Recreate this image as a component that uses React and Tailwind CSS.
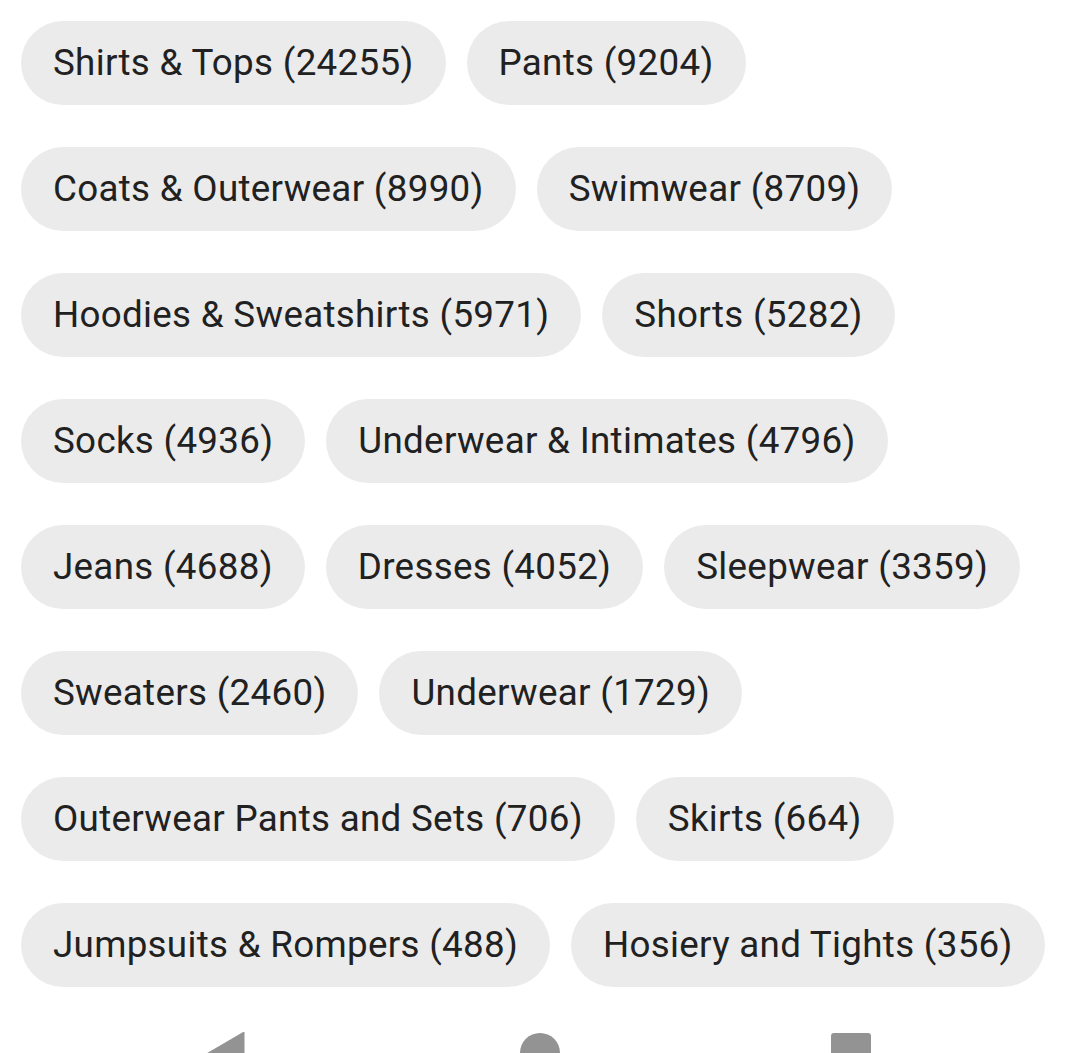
const categories = [
  ["Shirts & Tops", 24255],
  ["Pants", 9204],
  ["Coats & Outerwear", 8990],
  ["Swimwear", 8709],
  ["Hoodies & Sweatshirts", 5971],
  ["Shorts", 5282],
  ["Socks", 4936],
  ["Underwear & Intimates", 4796],
  ["Jeans", 4688],
  ["Dresses", 4052],
  ["Sleepwear", 3359],
  ["Sweaters", 2460],
  ["Underwear", 1729],
  ["Outerwear Pants and Sets", 706],
  ["Skirts", 664],
  ["Jumpsuits & Rompers", 488],
  ["Hosiery and Tights", 356],
];

// rows as laid out on the phone (chip group wraps at this width)
const rows = [
  [0, 1],
  [2, 3],
  [4, 5],
  [6, 7],
  [8, 9, 10],
  [11, 12],
  [13, 14],
  [15, 16],
];

function Chip({ label, count }) {
  return (
    <button className="flex h-[84px] shrink-0 items-center whitespace-nowrap rounded-full bg-[#ebebeb] px-[32px] text-[36.75px] tracking-[0.3px] text-[#212121]">
      {label} ({count})
    </button>
  );
}

export default function App() {
  return (
    <div
      className="h-[1053px] w-[1080px] overflow-hidden bg-white"
      style={{ fontFamily: "Roboto, 'Noto Sans', sans-serif" }}
    >
      <div className="flex flex-col gap-[42px] px-[21px] pt-[21px]">
        {rows.map((row, i) => (
          <div key={i} className="flex gap-[21px]">
            {row.map((idx) => (
              <Chip key={idx} label={categories[idx][0]} count={categories[idx][1]} />
            ))}
          </div>
        ))}
      </div>

      {/* android nav bar, mostly cut off */}
      <div className="mt-[45px] flex items-start">
        <svg className="ml-[203px]" width="42" height="48" viewBox="0 0 42 48">
          <path d="M41 0 L41 48 L0 24 Z" fill="#939393" strokeLinejoin="round" stroke="#939393" strokeWidth="1" />
        </svg>
        <div className="ml-[275px] mt-[1px] h-[40px] w-[40px] rounded-full bg-[#939393]" />
        <div className="ml-[271px] mt-[1px] h-[40px] w-[40px] rounded-[3px] bg-[#939393]" />
      </div>
    </div>
  );
}
